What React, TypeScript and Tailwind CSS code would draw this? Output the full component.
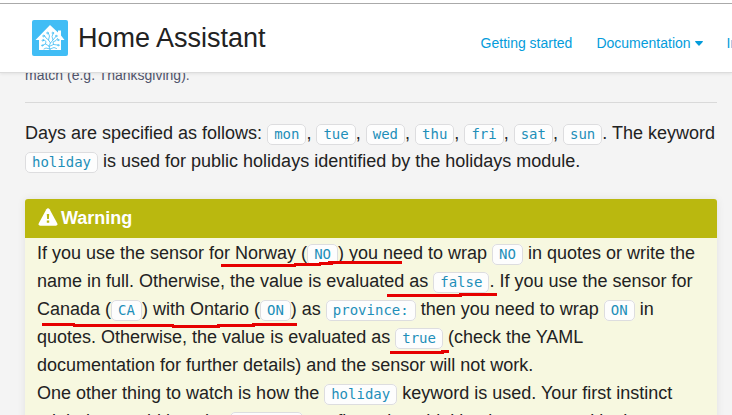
import type { ReactNode } from "react";

function Code({ children }: { children: ReactNode }) {
  return (
    <code className="rounded-[5px] border border-[#dddddf] bg-[#fdfdfd] px-[6px] pt-px pb-[2px] font-['DejaVu_Sans_Mono',monospace] text-[14px] leading-none text-[#1e8fb9]">
      {children}
    </code>
  );
}

function Logo() {
  return (
    <svg viewBox="0 0 36 36" className="size-9 shrink-0" aria-hidden="true">
      <rect width="36" height="36" rx="2" fill="#41bdf5" />
      <path fill="#fff" d="M18 5 L26 12.5 V10.5 H29 V15.5 L32.5 20 H29 V30 H7 V20 H3.5 Z" />
      <g stroke="#41bdf5" strokeWidth="0.8" fill="none" strokeLinecap="round">
        <path d="M18 29.5 L17 26 L18.5 23 L16.5 20 L17.5 16 L16.5 13.5 M18.5 23 L21 20 L20 16.5 L21 14 M17 26 L13.5 24 L14 21.5 L11.5 19.5 M13.5 24 L11 25 M17 26.5 L21.5 24.5 L21 22 L24 20.5 L25.5 18.5 M21.5 24.5 L25.5 25 M16.5 20 L14 18 L12.5 15.5 M21 20 L23.5 17 M18 29 L14 28 L12 29 M18 29 L22 27.5 L24.5 28.5" />
        <circle cx="15.5" cy="13" r="0.8" />
        <circle cx="20.8" cy="13" r="0.8" />
        <circle cx="11.5" cy="16" r="0.8" />
        <circle cx="24.2" cy="16" r="0.8" />
        <circle cx="10.8" cy="20.5" r="0.7" />
        <circle cx="26.2" cy="20" r="0.7" />
        <circle cx="10.3" cy="25.5" r="0.7" />
        <circle cx="26.3" cy="25.2" r="0.7" />
      </g>
    </svg>
  );
}

const days = ["mon", "tue", "wed", "thu", "fri", "sat", "sun"];

export default function App() {
  return (
    <div className="relative min-h-screen overflow-hidden bg-[#f4f4f4] font-['Liberation_Sans',Arial,sans-serif] text-[18px] leading-7 text-[#222222]">
      <header className="relative z-10 border-b border-[#dcdcdc] bg-white pt-[3px] shadow-[0_1px_3px_rgba(0,0,0,0.08)]">
        <div className="flex h-[69px] items-center overflow-hidden border-t border-[#aaaaaa] pl-8">
          <a href="#" className="flex shrink-0 items-center gap-[10px] text-[27px] leading-9 text-[#222222]">
            <Logo />
            Home Assistant
          </a>
          <nav className="ml-[215px] flex shrink-0 gap-6 pt-[10px] text-[14px] leading-5 text-[#049cdb]">
            <a href="#">Getting started</a>
            <a href="#" className="flex items-center gap-1">
              Documentation
              <svg viewBox="0 0 8 5" className="h-[5px] w-2" fill="currentColor" aria-hidden="true">
                <path d="M0.6 0 H7.4 Q8.3 0.2 7.7 1 L4.5 4.6 Q4 5 3.5 4.6 L0.3 1 Q-0.3 0.2 0.6 0Z" />
              </svg>
            </a>
            <a href="#">Integrations</a>
          </nav>
        </div>
      </header>
      <main className="pr-[15px] pl-[25px]">
        <p className="-mt-2 text-[14px] leading-5 text-[#50546c]">match (e.g. Thanksgiving).</p>
        <hr className="mt-[17px] border-[#d9d9d9]" />
        <p className="mt-4">
          Days are specified as follows:{" "}
          {days.map((day, i) => (
            <span key={day}>
              <Code>{day}</Code>
              {i < days.length - 1 ? ", " : ". "}
            </span>
          ))}
          The keyword <Code>holiday</Code> is used for public holidays identified by the holidays module.
        </p>
        <section className="relative mt-6 rounded-[3px] bg-[#f7f8e0] shadow-[0_0_8px_rgba(0,0,0,0.08)]">
          <h2 className="flex items-center gap-[3px] rounded-t-[3px] bg-[#bab80f] px-[13px] pt-[5px] pb-[6px] font-bold text-white">
            <svg viewBox="0 0 20 18" className="-mt-[2px] h-[18px] w-5" aria-hidden="true">
              <path fill="#fff" d="M8.4 1.2 Q10 -0.8 11.6 1.2 L19.2 15.2 Q20 17.4 17.8 17.8 H2.2 Q0 17.4 0.8 15.2 Z" />
              <path fill="#bab80f" d="M8.8 6 H11.2 L10.9 11 H9.1 Z M8.8 12.6 H11.2 V14.8 H8.8 Z" />
            </svg>
            Warning
          </h2>
          <div className="px-3 pt-px">
            <p>
              If you use the sensor for Norway (<Code>NO</Code>) you need to wrap <Code>NO</Code> in quotes or write the
              name in full. Otherwise, the value is evaluated as <Code>false</Code>. If you use the sensor for Canada (
              <Code>CA</Code>) with Ontario (<Code>ON</Code>) as <Code>province:</Code> then you need to wrap{" "}
              <Code>ON</Code> in quotes. Otherwise, the value is evaluated as <Code>true</Code> (check the YAML
              documentation for further details) and the sensor will not work.
            </p>
            <p>
              One other thing to watch is how the <Code>holiday</Code> keyword is used. Your first instinct might be to
              add it to the <Code>exclude</Code> configuration, thinking it means to skip the holidays.
            </p>
          </div>
          <svg
            viewBox="0 0 692 216"
            className="pointer-events-none absolute top-0 left-0 h-[216px] w-[692px]"
            fill="none"
            stroke="#e60000"
            strokeWidth="3"
            aria-hidden="true"
          >
            <path d="M196 66.5 H271 M269 65.5 H296 M294 64.5 H308 M303 63.5 H377" />
            <path d="M362 96.5 H437 M434 95.5 H472" />
            <path d="M17 125.5 H50 M48 126.5 H149 M147 127.5 H195 M192 126.5 H230 M227 125.5 H272" />
            <path d="M365 153.5 H419 M416 152.5 H424" />
          </svg>
        </section>
      </main>
    </div>
  );
}
